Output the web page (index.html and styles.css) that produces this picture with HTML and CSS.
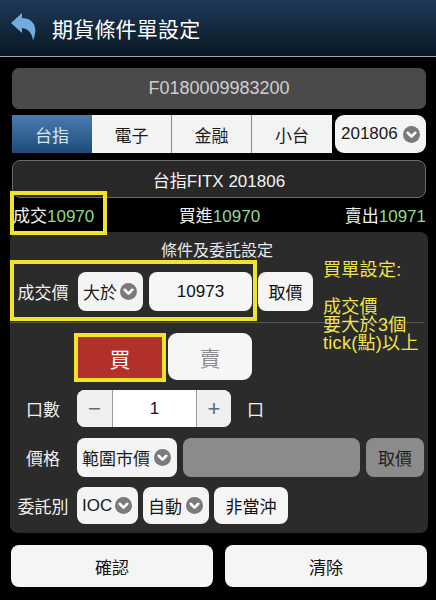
FILE: index.html
```html
<!DOCTYPE html>
<html lang="zh-Hant">
<head>
<meta charset="utf-8">
<title>期貨條件單設定</title>
<link rel="stylesheet" href="styles.css">
</head>
<body>
<div class="app">
  <header class="topbar">
    <svg class="back" viewBox="0 0 26 28" width="26" height="28" aria-hidden="true">
      <path d="M0 10 L11 0 L11 20 Z" fill="#72acdc"/>
      <path d="M10 5 C22 5 28 13 22 27.5 C21 20 17 15 10 15 Z" fill="#72acdc"/>
    </svg>
    <h1 class="title">期貨條件單設定</h1>
  </header>

  <main class="content">
    <div class="account">F0180009983200</div>

    <div class="segrow">
      <div class="tabs">
        <div class="tab active">台指</div>
        <div class="tab">電子</div>
        <div class="tab">金融</div>
        <div class="tab">小台</div>
      </div>
      <div class="select month">201806<svg class="chev" viewBox="0 0 18 18"><circle cx="9" cy="9" r="9" fill="#7a7a7a"/><path d="M5 7.2 L9 11.2 L13 7.2" stroke="#fff" stroke-width="2.8" fill="none" stroke-linecap="round" stroke-linejoin="round"/></svg></div>
    </div>

    <div class="product">台指FITX 201806</div>

    <div class="quotes">
      <span class="q">成交<span class="num">10970</span></span>
      <span class="q">買進<span class="num">10970</span></span>
      <span class="q">賣出<span class="num">10971</span></span>
    </div>

    <section class="panel">
      <div class="panel-title">條件及委託設定</div>

      <div class="row cond">
        <span class="lbl">成交價</span>
        <div class="select w-gt">大於<svg class="chev" viewBox="0 0 18 18"><circle cx="9" cy="9" r="9" fill="#7a7a7a"/><path d="M5 7.2 L9 11.2 L13 7.2" stroke="#fff" stroke-width="2.8" fill="none" stroke-linecap="round" stroke-linejoin="round"/></svg></div>
        <div class="field w-price">10973</div>
        <div class="btn w-take">取價</div>
      </div>

      <div class="divider"></div>

      <div class="side">
        <div class="buy">買</div>
        <div class="sell">賣</div>
      </div>

      <div class="row qty">
        <span class="lbl">口數</span>
        <div class="stepper">
          <span class="step minus">−</span>
          <span class="step-val">1</span>
          <span class="step plus">+</span>
        </div>
        <span class="unit">口</span>
      </div>

      <div class="row price">
        <span class="lbl">價格</span>
        <div class="select w-range">範圍市價<svg class="chev" viewBox="0 0 18 18"><circle cx="9" cy="9" r="9" fill="#7a7a7a"/><path d="M5 7.2 L9 11.2 L13 7.2" stroke="#fff" stroke-width="2.8" fill="none" stroke-linecap="round" stroke-linejoin="round"/></svg></div>
        <div class="field disabled w-gray"></div>
        <div class="btn disabled w-take2">取價</div>
      </div>

      <div class="row order">
        <span class="lbl">委託別</span>
        <div class="select w-ioc">IOC<svg class="chev" viewBox="0 0 18 18"><circle cx="9" cy="9" r="9" fill="#7a7a7a"/><path d="M5 7.2 L9 11.2 L13 7.2" stroke="#fff" stroke-width="2.8" fill="none" stroke-linecap="round" stroke-linejoin="round"/></svg></div>
        <div class="select w-auto">自動<svg class="chev" viewBox="0 0 18 18"><circle cx="9" cy="9" r="9" fill="#7a7a7a"/><path d="M5 7.2 L9 11.2 L13 7.2" stroke="#fff" stroke-width="2.8" fill="none" stroke-linecap="round" stroke-linejoin="round"/></svg></div>
        <div class="btn w-day">非當沖</div>
      </div>
    </section>

    <div class="actions">
      <div class="action">確認</div>
      <div class="action">清除</div>
    </div>
  </main>

  <div class="mark mark-last"></div>
  <div class="mark mark-cond"></div>
  <div class="note">買單設定:<br><br>成交價<br>要大於3個<br>tick(點)以上</div>
</div>
</body>
</html>
```

FILE: styles.css
```css
* { box-sizing: border-box; }

html, body {
  margin: 0;
  padding: 0;
  background: #000;
}

body {
  font-family: "Liberation Sans", "Noto Sans CJK TC", sans-serif;
  font-size: 17px;
  color: #fff;
}

.app {
  position: relative;
  width: 436px;
  height: 600px;
  overflow: hidden;
  background: #000;
}

/* header */
.topbar {
  height: 57px;
  border-bottom: 1px solid #9aa6b4;
  background: linear-gradient(#1d3a58, #0a1723);
  display: flex;
  align-items: center;
  padding-left: 11px;
  gap: 15px;
}

.back { flex: none; margin-top: -2px; }

.title {
  margin: 0;
  font-size: 21px;
  font-weight: normal;
  color: #fff;
  letter-spacing: 0.2px;
}

/* content */
.content {
  display: flex;
  flex-direction: column;
  padding: 0 10px 0 12px;
}

.account {
  margin-top: 11px;
  height: 41px;
  border-radius: 7px;
  background: #4a4a4a;
  color: #cfcfcf;
  font-size: 18px;
  display: flex;
  align-items: center;
  justify-content: center;
}

.segrow {
  margin-top: 6px;
  height: 38px;
  display: flex;
  gap: 3px;
}

.tabs {
  width: 320px;
  display: flex;
}

.tab {
  width: 80px;
  display: flex;
  align-items: center;
  justify-content: center;
  background: #f3f3f3;
  color: #1c1c1c;
  border-right: 1px solid #8a8a8a;
}

.tab:last-child { border-right: none; }

.tab.active {
  background: linear-gradient(#4b7cad, #1d4a7b);
  color: #d6e6f5;
  border-right: none;
}

.select {
  display: flex;
  align-items: center;
  justify-content: space-between;
  gap: 3px;
  padding: 0 6px 0 5px;
  background: #f4f4f4;
  border-radius: 8px;
  color: #1a1a1a;
  flex: none;
}

.chev { width: 17px; height: 17px; flex: none; }

.month {
  width: 91px;
  padding: 0 6px 0 6px;
  border-radius: 9px;
}

.product {
  margin-top: 7px;
  height: 38px;
  border: 1px solid #6a6a6a;
  border-radius: 8px;
  background: #282828;
  color: #f2f2f2;
  display: flex;
  align-items: center;
  justify-content: center;
}

.quotes {
  height: 32px;
  display: flex;
  align-items: center;
  justify-content: space-between;
  padding-left: 1px;
  color: #f0f0f0;
}

.num { color: #8fd88c; }

/* panel */
.panel {
  margin: 2px -2px 0 -2px;
  padding: 8px 4px 9px 0;
  background: #2b2b2b;
  border-radius: 8px;
  display: flex;
  flex-direction: column;
}

.panel-title {
  text-align: center;
  line-height: 22px;
  font-size: 16px;
  color: #e9e9e9;
}

.row {
  display: flex;
  align-items: stretch;
  gap: 6px;
}

.lbl {
  width: 61px;
  padding-left: 5px;
  flex: none;
  text-align: center;
  align-self: center;
  color: #f0f0f0;
  white-space: nowrap;
}

.cond { margin-top: 10px; height: 39px; }
.cond .w-gt { margin-left: 1px; width: 65px; }

.field {
  display: flex;
  align-items: center;
  justify-content: center;
  background: #f6f6f6;
  border-radius: 8px;
  color: #111;
  flex: none;
}

.w-price { width: 103px; }

.btn {
  display: flex;
  align-items: center;
  justify-content: center;
  background: #f5f5f5;
  border-radius: 8px;
  color: #111;
  flex: none;
}

.w-take { width: 55px; }

.divider {
  margin-top: 11px;
  height: 1px;
  background: #575757;
}

.side {
  margin-top: 10px;
  height: 49px;
  display: flex;
  align-items: flex-start;
  gap: 2px;
  padding-left: 64px;
}

.buy {
  width: 92px;
  height: 49px;
  border: 4px solid #f1e22b;
  background: #b2302a;
  color: #fff;
  font-size: 21px;
  display: flex;
  align-items: center;
  justify-content: center;
}

.sell {
  width: 84px;
  height: 47px;
  border-radius: 9px;
  background: #f6f6f6;
  color: #8d8d8d;
  font-size: 21px;
  display: flex;
  align-items: center;
  justify-content: center;
}

.qty { margin-top: 8px; height: 37px; }

.stepper {
  width: 154px;
  display: flex;
  border-radius: 8px;
  overflow: hidden;
  flex: none;
  background: #fff;
}

.step {
  display: flex;
  align-items: center;
  justify-content: center;
  background: #efefef;
  color: #566c84;
  font-size: 22px;
}

.minus { width: 36px; border-right: 1px solid #9a9a9a; }
.plus { width: 35px; border-left: 1px solid #9a9a9a; }

.step-val {
  flex: 1;
  display: flex;
  align-items: center;
  justify-content: center;
  color: #111;
}

.unit {
  align-self: center;
  margin-left: 10px;
  color: #f0f0f0;
}

.price { margin-top: 11px; height: 39px; }
.w-range { width: 100px; }
.w-gray { width: 177px; }
.w-take2 { width: 58px; }

.disabled {
  background: #8b8b8b;
  color: #1e1e1e;
}

.order { margin-top: 10px; height: 37px; gap: 5px; }
.order .lbl { margin-right: 1px; }
.w-ioc { width: 61px; }
.w-auto { width: 66px; }
.w-day { width: 74px; }

/* bottom */
.actions {
  margin: 12px -1px 0 -1px;
  display: flex;
  gap: 12px;
}

.action {
  flex: 1;
  height: 42px;
  border-radius: 8px;
  background: #f5f5f5;
  color: #111;
  display: flex;
  align-items: center;
  justify-content: center;
}

/* annotation overlays */
.mark {
  position: absolute;
  border: 4px solid #f1e22b;
}

.mark-last { left: 10px; top: 191px; width: 97px; height: 44px; }
.mark-cond { left: 10px; top: 260px; width: 247px; height: 61px; }

.note {
  position: absolute;
  left: 323px;
  top: 261px;
  font-size: 18px;
  line-height: 18.3px;
  color: #efe548;
  letter-spacing: 0.3px;
}
```
